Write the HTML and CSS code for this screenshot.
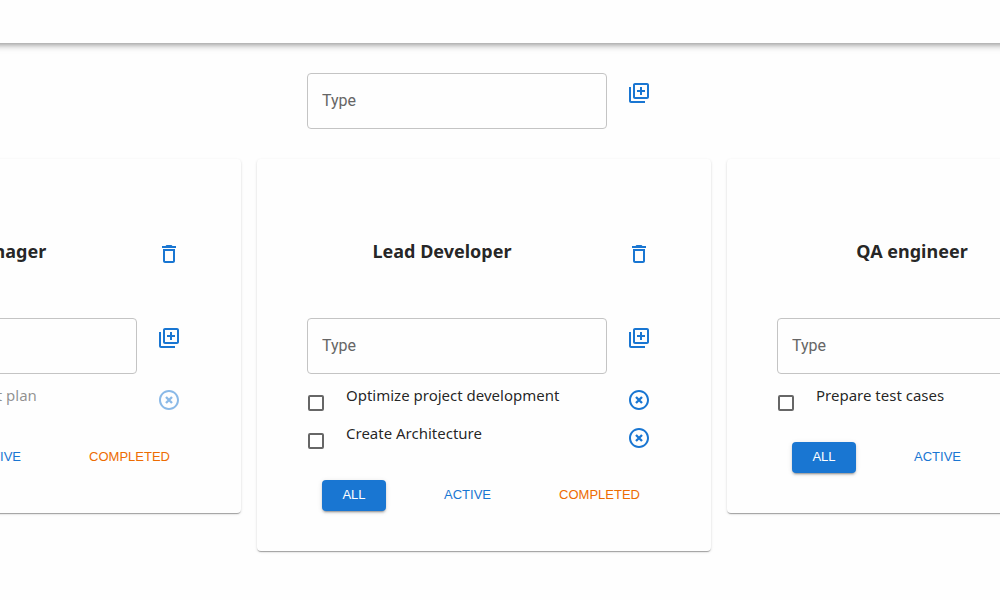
FILE: index.html
```
<!DOCTYPE html>
<html lang="en">
<head>
<meta charset="utf-8">
<meta name="viewport" content="width=device-width, initial-scale=1">
<title>Todo lists</title>
<link rel="stylesheet" href="styles.css">
</head>
<body>
<svg class="sprite" aria-hidden="true">
  <symbol id="add" viewBox="0 0 24 24"><path d="M4 6H2v14c0 1.1.9 2 2 2h14v-2H4V6zm16-4H8c-1.1 0-2 .9-2 2v12c0 1.1.9 2 2 2h12c1.1 0 2-.9 2-2V4c0-1.1-.9-2-2-2zm0 14H8V4h12v12zm-7-2h2v-3h3V9h-3V6h-2v3h-3v2h3v3z"/></symbol>
  <symbol id="trash" viewBox="0 0 24 24"><path d="M6 19c0 1.1.9 2 2 2h8c1.1 0 2-.9 2-2V7H6v12zM8 9h8v10H8V9zm7.500-5-1-1h-5l-1 1H5v2h14V4h-3.500z"/></symbol>
  <symbol id="remove" viewBox="0 0 24 24"><path d="M12 2C6.470 2 2 6.470 2 12s4.470 10 10 10 10-4.470 10-10S17.530 2 12 2zm0 18c-4.410 0-8-3.590-8-8s3.590-8 8-8 8 3.590 8 8-3.590 8-8 8z"/><path d="M9 9l6 6M15 9l-6 6" fill="none" stroke="currentColor" stroke-width="2.300"/></symbol>
</svg>
<header class="app-bar"></header>
<main class="board">
  <form class="add-form">
    <input class="field" type="text" placeholder="Type" aria-label="New list title">
    <button class="icon-button" type="button" aria-label="Add list"><svg class="icon"><use href="#add"/></svg></button>
  </form>
  <div class="lists">
    <section class="card">
      <div class="card-head">
        <h3 class="title">Project Manager</h3>
        <button class="icon-button" type="button" aria-label="Delete list"><svg class="icon"><use href="#trash"/></svg></button>
      </div>
      <form class="add-form">
        <input class="field" type="text" placeholder="Type" aria-label="New task">
        <button class="icon-button" type="button" aria-label="Add task"><svg class="icon"><use href="#add"/></svg></button>
      </form>
      <ul class="tasks">
        <li class="task done">
          <input class="check" type="checkbox" id="task-1" checked>
          <label class="task-name" for="task-1">Create the project plan</label>
          <button class="icon-button" type="button" aria-label="Remove task"><svg class="icon"><use href="#remove"/></svg></button>
        </li>
      </ul>
      <div class="filters">
        <button class="filter selected" type="button">ALL</button>
        <button class="filter" type="button">ACTIVE</button>
        <button class="filter completed" type="button">COMPLETED</button>
      </div>
    </section>
    <section class="card">
      <div class="card-head">
        <h3 class="title">Lead Developer</h3>
        <button class="icon-button" type="button" aria-label="Delete list"><svg class="icon"><use href="#trash"/></svg></button>
      </div>
      <form class="add-form">
        <input class="field" type="text" placeholder="Type" aria-label="New task">
        <button class="icon-button" type="button" aria-label="Add task"><svg class="icon"><use href="#add"/></svg></button>
      </form>
      <ul class="tasks">
        <li class="task">
          <input class="check" type="checkbox" id="task-2">
          <label class="task-name" for="task-2">Optimize project development</label>
          <button class="icon-button" type="button" aria-label="Remove task"><svg class="icon"><use href="#remove"/></svg></button>
        </li>
        <li class="task">
          <input class="check" type="checkbox" id="task-3">
          <label class="task-name" for="task-3">Create Architecture</label>
          <button class="icon-button" type="button" aria-label="Remove task"><svg class="icon"><use href="#remove"/></svg></button>
        </li>
      </ul>
      <div class="filters">
        <button class="filter selected" type="button">ALL</button>
        <button class="filter" type="button">ACTIVE</button>
        <button class="filter completed" type="button">COMPLETED</button>
      </div>
    </section>
    <section class="card">
      <div class="card-head">
        <h3 class="title">QA engineer</h3>
        <button class="icon-button" type="button" aria-label="Delete list"><svg class="icon"><use href="#trash"/></svg></button>
      </div>
      <form class="add-form">
        <input class="field" type="text" placeholder="Type" aria-label="New task">
        <button class="icon-button" type="button" aria-label="Add task"><svg class="icon"><use href="#add"/></svg></button>
      </form>
      <ul class="tasks">
        <li class="task">
          <input class="check" type="checkbox" id="task-4">
          <label class="task-name" for="task-4">Prepare test cases</label>
          <button class="icon-button" type="button" aria-label="Remove task"><svg class="icon"><use href="#remove"/></svg></button>
        </li>
      </ul>
      <div class="filters">
        <button class="filter selected" type="button">ALL</button>
        <button class="filter" type="button">ACTIVE</button>
        <button class="filter completed" type="button">COMPLETED</button>
      </div>
    </section>
  </div>
</main>
</body>
</html>
```
FILE: styles.css
```
* {
  box-sizing: border-box;
}

body {
  margin: 0;
  overflow-x: hidden;
  background: #fefefe;
  color: rgba(0, 0, 0, 0.87);
  font-family: "Noto Sans", sans-serif;
  font-size: 15px;
}

.sprite {
  display: none;
}

.app-bar {
  min-height: 43px;
  margin: 0 -16px;
  background: #fefefe;
  box-shadow: 0 2px 4px -1px rgba(0, 0, 0, 0.2), 0 4px 5px 0 rgba(0, 0, 0, 0.14), 0 1px 10px 0 rgba(0, 0, 0, 0.12);
}

.board {
  display: flex;
  flex-direction: column;
  align-items: center;
  gap: 30px;
  padding: 30px 32px 40px 0;
}

.add-form {
  display: flex;
  gap: 10px;
  width: 354px;
}

.field {
  flex: 1;
  min-width: 0;
  height: 56px;
  padding: 0 14px 2px;
  border: 1px solid #c4c4c4;
  border-radius: 4px;
  background: transparent;
  color: inherit;
  font: 16px Roboto, "Liberation Sans", sans-serif;
}

.field::placeholder {
  color: #666;
  opacity: 1;
}

.icon-button {
  display: flex;
  align-items: center;
  justify-content: center;
  flex: none;
  width: 44px;
  height: 40px;
  padding: 0;
  border: 0;
  background: none;
  color: #1976d2;
  cursor: pointer;
}

.icon {
  width: 24px;
  height: 24px;
  fill: currentColor;
}

.lists {
  display: flex;
  align-items: flex-start;
  gap: 16px;
}

.card {
  flex: none;
  padding: 75px 50px 40px;
  border-radius: 4px;
  background: #fefefe;
  box-shadow: 0 2px 1px -1px rgba(0, 0, 0, 0.2), 0 1px 1px 0 rgba(0, 0, 0, 0.14), 0 1px 3px 0 rgba(0, 0, 0, 0.12);
}

.card-head {
  display: flex;
  margin-bottom: 44px;
}

.title {
  flex: 1;
  margin: 0;
  padding-right: 40px;
  font-size: 18px;
  line-height: 34px;
  text-align: center;
}

.tasks {
  margin: 7px 0 23px;
  padding: 0;
  list-style: none;
}

.task {
  display: flex;
  height: 38px;
}

.task .icon-button {
  height: 38px;
}

.done {
  opacity: 0.5;
}

.check {
  appearance: none;
  width: 16px;
  height: 16px;
  margin: 14px 22px 0 1px;
  border: 2px solid #666;
  border-radius: 2px;
}

.check:checked {
  border-color: #1976d2;
  background: #1976d2;
}

.task-name {
  flex: 1;
  line-height: 28px;
}

.filters {
  display: flex;
  justify-content: space-between;
  padding: 0 11px 0 15px;
}

.filter {
  min-width: 64px;
  height: 31px;
  padding: 0 10px 3px;
  border: 0;
  border-radius: 4px;
  background: none;
  color: #1976d2;
  font: 13px "Liberation Sans", Arial, sans-serif;
  cursor: pointer;
}

.selected {
  background: #1976d2;
  color: #fff;
  box-shadow: 0 3px 1px -2px rgba(0, 0, 0, 0.2), 0 2px 2px 0 rgba(0, 0, 0, 0.14), 0 1px 5px 0 rgba(0, 0, 0, 0.12);
}

.completed {
  color: #ed6c02;
}
```
